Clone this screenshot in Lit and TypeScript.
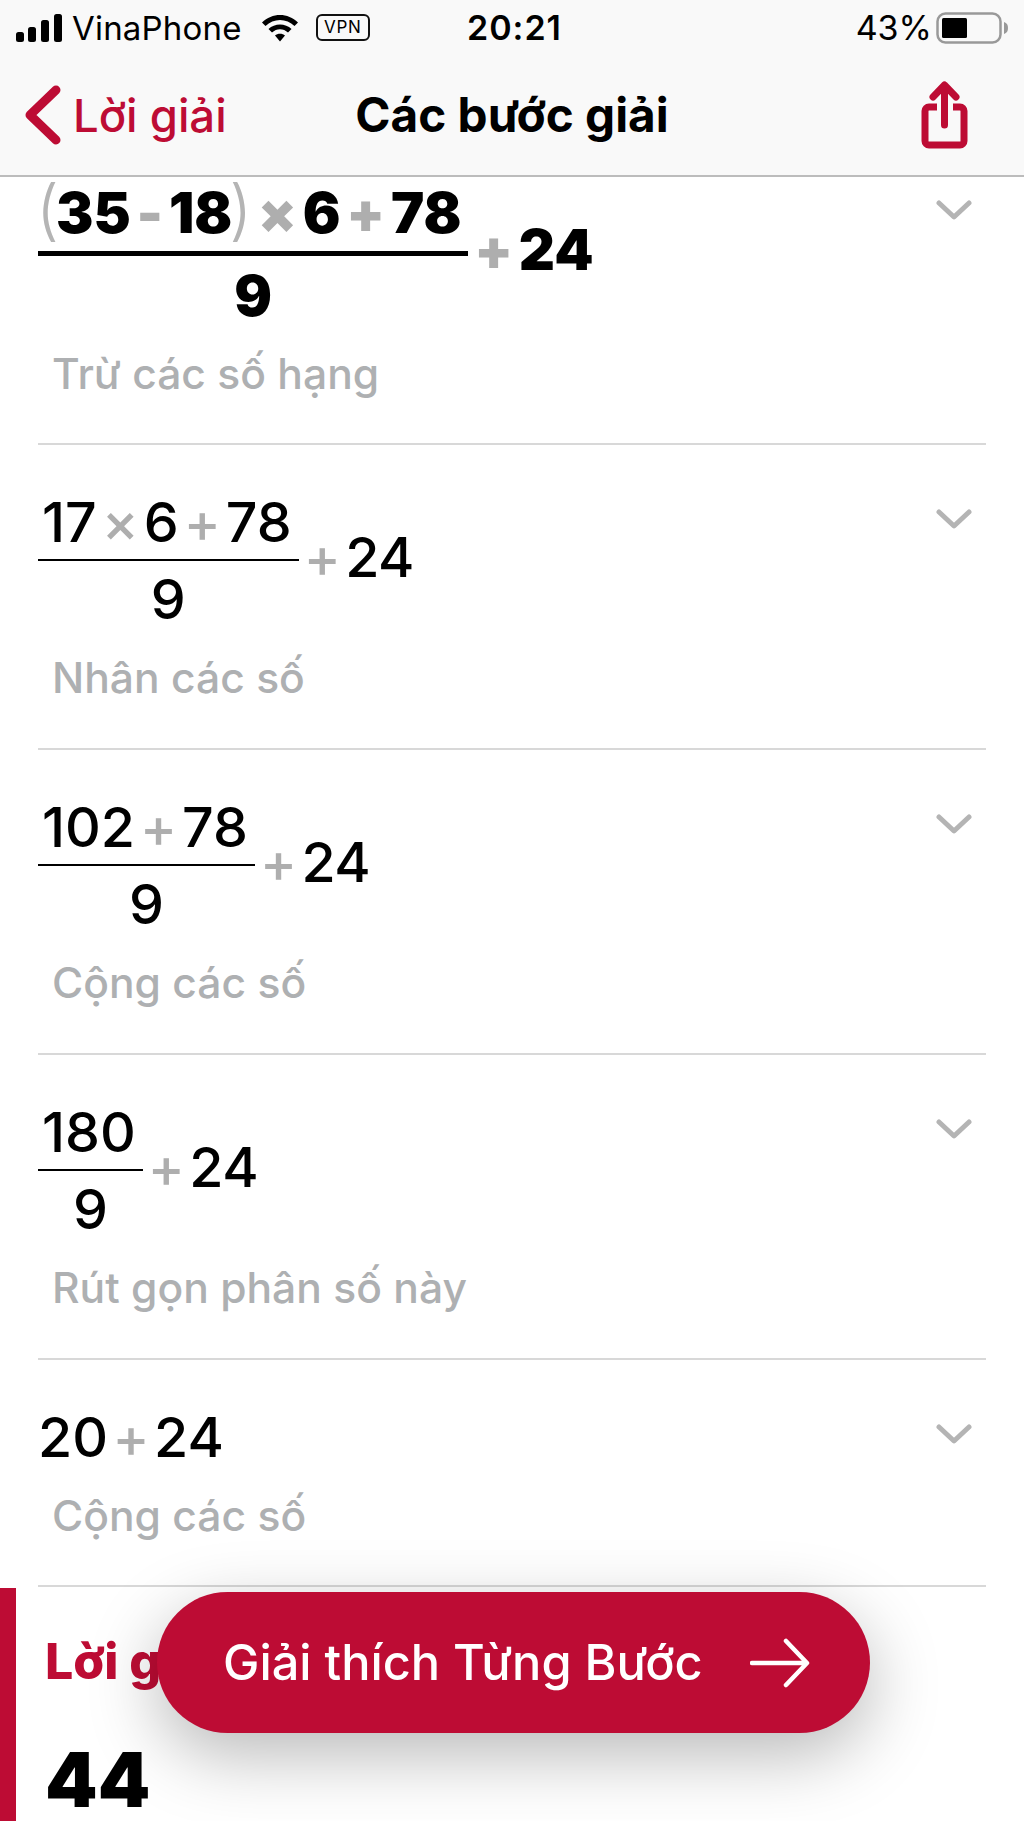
import { LitElement, html, css, svg } from "lit";
import { customElement } from "lit/decorators.js";

const op = (s: string) => html`<span class="op">${s}</span>`;
const chevron = svg`<path d="M3 3 L18 17 L33 3" fill="none" stroke="#b4b4b4" stroke-width="5" stroke-linecap="round" stroke-linejoin="round"/>`;

@customElement("app-root")
export class AppRoot extends LitElement {
  static styles = css`
    :host { display: block; width: 1024px; height: 1821px; position: relative; overflow: hidden; background: #fff;
      font-family: Inter, "Liberation Sans", sans-serif; color: #000; }
    .top { background: #f9f9f9; height: 175px; border-bottom: 2px solid #bcbcbc; display: flex; flex-direction: column; }
    .status { height: 55px; display: grid; grid-template-columns: 1fr auto 1fr; align-items: center; padding: 0 15px 0 16px; font-size: 33px; }
    .st-l { display: flex; align-items: center; }
    .st-r { display: flex; align-items: center; justify-content: flex-end; }
    .carrier { margin-left: 10px; margin-right: 19px; font-weight: 400; letter-spacing: .2px; }
    .vpn { box-sizing: border-box; width: 54px; height: 27px; margin-left: 17px; border: 2px solid #111; border-radius: 6px; font-size: 17px; line-height: 23px; text-align: center; letter-spacing: .6px; }
    .time { font-weight: 600; font-size: 34px; letter-spacing: 1px; margin-left: 4px; }
    .pct { font-size: 34px; margin-right: 4px; }
    .nav { flex: 1; display: grid; grid-template-columns: 1fr auto 1fr; align-items: center; padding: 0 24px 0 24px; }
    .back { display: flex; align-items: center; color: #bd0c34; font-size: 45.5px; gap: 12px; font-weight: 500; }
    .title { font-size: 47.7px; font-weight: 700; }
    .share { justify-self: end; display: block; margin-right: 31px; }
    .list { height: 1644px; }
    .row { position: relative; margin: 0 38px; border-bottom: 2px solid #d8d8d8; box-sizing: border-box; height: 305px; padding-top: 52px; }
    .row.first { height: 268px; padding-top: 3px; }
    .row.plain { height: 227px; padding-top: 47px; }
    .row svg.chev { position: absolute; right: 14px; top: 64px; }
    .row.first svg.chev { top: 23px; }
    .math { display: flex; align-items: flex-start; font-size: 55.5px; font-weight: 500; line-height: 56px; height: 127px; }
    .plain .math { height: 62px; line-height: 60px; }
    .frac { display: flex; flex-direction: column; align-items: center; }
    .num { height: 62px; line-height: 50px; padding: 0 7px 0 4px; white-space: nowrap; }
    .den { border-top: 2px solid #000; padding-top: 10px; align-self: stretch; text-align: center; }
    .op { color: #aeaeae; margin: 0 5px; }
    .plain .op { margin: 0 4.5px; }
    .after { margin-top: 32px; white-space: nowrap; letter-spacing: -.5px; }
    .heavy { font-weight: 900; font-size: 56px; line-height: 60px; }
    .heavy .den { border-top-width: 5px; padding-top: 10px; }
    .heavy .num { height: 71px; line-height: 58px; padding: 0 7px 0 0; }
    .heavy .op { margin: 0 5.8px; }
    .after.heavy { margin-top: 40px; letter-spacing: 0; }
    .paren { color: #b4b4b4; font-weight: 300; font-size: 66px; margin: 0 -3px 0 -2px; }
    .paren.close { margin: 0 0 0 -3px; }
    .cap { color: #aeb0b2; font-size: 42.6px; font-weight: 500; line-height: 60px; margin: 24px 0 0 14px; }
    .first .cap { margin-top: 37px; }
    .plain .cap { margin-top: 17px; }
    .answer { margin-top: 1px; border-left: 16px solid #bd0c34; height: 233px; box-sizing: border-box; padding: 43px 0 0 29px; }
    .ans-h { color: #bd0c34; font-size: 50px; font-weight: 800; line-height: 60px; }
    .ans-v { font-size: 75px; font-weight: 900; line-height: 54px; margin-top: 62px; }
    .cta { position: absolute; left: 157px; top: 1592px; width: 713px; height: 141px; box-sizing: border-box; border: 0; border-radius: 71px; background: #bd0c34; color: #fff; font-family: inherit;
      display: flex; align-items: center; justify-content: space-between; padding: 0 60px 0 66px; font-size: 48.7px; font-weight: 500; box-shadow: 0 22px 70px rgba(0,0,0,.28); }
    .cta span { white-space: nowrap; }
  `;

  private step(math: unknown, cap: string, cls = "") {
    return html`<section class="row ${cls}">
      <div class="math">${math}</div>
      <div class="cap">${cap}</div>
      <svg class="chev" width="36" height="21" viewBox="0 0 36 21">${chevron}</svg>
    </section>`;
  }

  private frac(num: unknown, den: string) {
    return html`<div class="frac"><div class="num">${num}</div><div class="den">${den}</div></div>
      <div class="after">${op("+")}24</div>`;
  }

  render() {
    return html`
      <header class="top">
        <div class="status">
          <div class="st-l">
            <svg width="46" height="28" viewBox="0 0 46 28"><g fill="#000">
              <rect x="0" y="18" width="8" height="10" rx="2.500"/><rect x="12" y="13" width="8" height="15" rx="2.500"/>
              <rect x="25" y="6" width="8" height="22" rx="2.500"/><rect x="38" y="0" width="8" height="28" rx="2.500"/></g></svg>
            <span class="carrier">VinaPhone</span>
            <svg width="38" height="28" viewBox="0 0 38 28"><path d="M1 8.500 C11 -1.500 27 -1.500 37 8.500 L33.500 12 C25.500 4 12.500 4 4.500 12 Z M7.500 15 C13.500 9 24.500 9 30.500 15 L27 18.500 C22.500 14 15.500 14 11 18.500 Z M14 21.500 C16.500 19 21.500 19 24 21.500 L19 27.500 Z" fill="#000"/></svg>
            <div class="vpn">VPN</div>
          </div>
          <div class="time">20:21</div>
          <div class="st-r">
            <span class="pct">43%</span>
            <svg width="73" height="32" viewBox="0 0 73 32">
              <rect x="1.500" y="1.500" width="63" height="29" rx="8" fill="none" stroke="#999" stroke-width="2.500"/>
              <rect x="6" y="6" width="25" height="20" rx="1.500" fill="#000"/>
              <path d="M68 10 C71 11 72 13 72 16 C72 19 71 21 68 22 Z" fill="#999"/>
            </svg>
          </div>
        </div>
        <nav class="nav">
          <div class="back">
            <svg width="37" height="60" viewBox="0 0 37 60"><path d="M32 5 L6 30 L32 55" fill="none" stroke="#bd0c34" stroke-width="9" stroke-linecap="round" stroke-linejoin="round"/></svg>
            <span>Lời giải</span>
          </div>
          <div class="title">Các bước giải</div>
          <svg class="share" width="48" height="68" viewBox="0 0 48 68">
            <rect x="4" y="26" width="39" height="38" rx="4" fill="none" stroke="#bd0c34" stroke-width="7"/>
            <path d="M24 46 V5 M12 16 L24 4 L36 16" fill="none" stroke="#f9f9f9" stroke-width="16"/>
            <path d="M23.500 44 V5 M12 16 L23.500 4 L35 16" fill="none" stroke="#bd0c34" stroke-width="7" stroke-linecap="round" stroke-linejoin="round"/>
          </svg>
        </nav>
      </header>
      <main class="list">
        ${this.step(
          html`<div class="frac heavy"><div class="num"><span class="paren">(</span>35${op("-")}18<span class="paren close">)</span>${op("×")}6${op("+")}78</div><div class="den">9</div></div>
          <div class="after heavy">${op("+")}24</div>`,
          "Trừ các số hạng", "first")}
        ${this.step(this.frac(html`17${op("×")}6${op("+")}78`, "9"), "Nhân các số")}
        ${this.step(this.frac(html`102${op("+")}78`, "9"), "Cộng các số")}
        ${this.step(this.frac(html`180`, "9"), "Rút gọn phân số này")}
        ${this.step(html`<div class="plain-expr">20${op("+")}24</div>`, "Cộng các số", "plain")}
        <section class="answer">
          <div class="ans-h">Lời giải</div>
          <div class="ans-v">44</div>
        </section>
      </main>
      <button class="cta">
        <span>Giải thích Từng Bước</span>
        <svg width="60" height="50" viewBox="0 0 60 50"><path d="M2 25 H56 M36 3 L57 25 L36 47" fill="none" stroke="#fff" stroke-width="4.500" stroke-linecap="round" stroke-linejoin="round"/></svg>
      </button>
    `;
  }
}
